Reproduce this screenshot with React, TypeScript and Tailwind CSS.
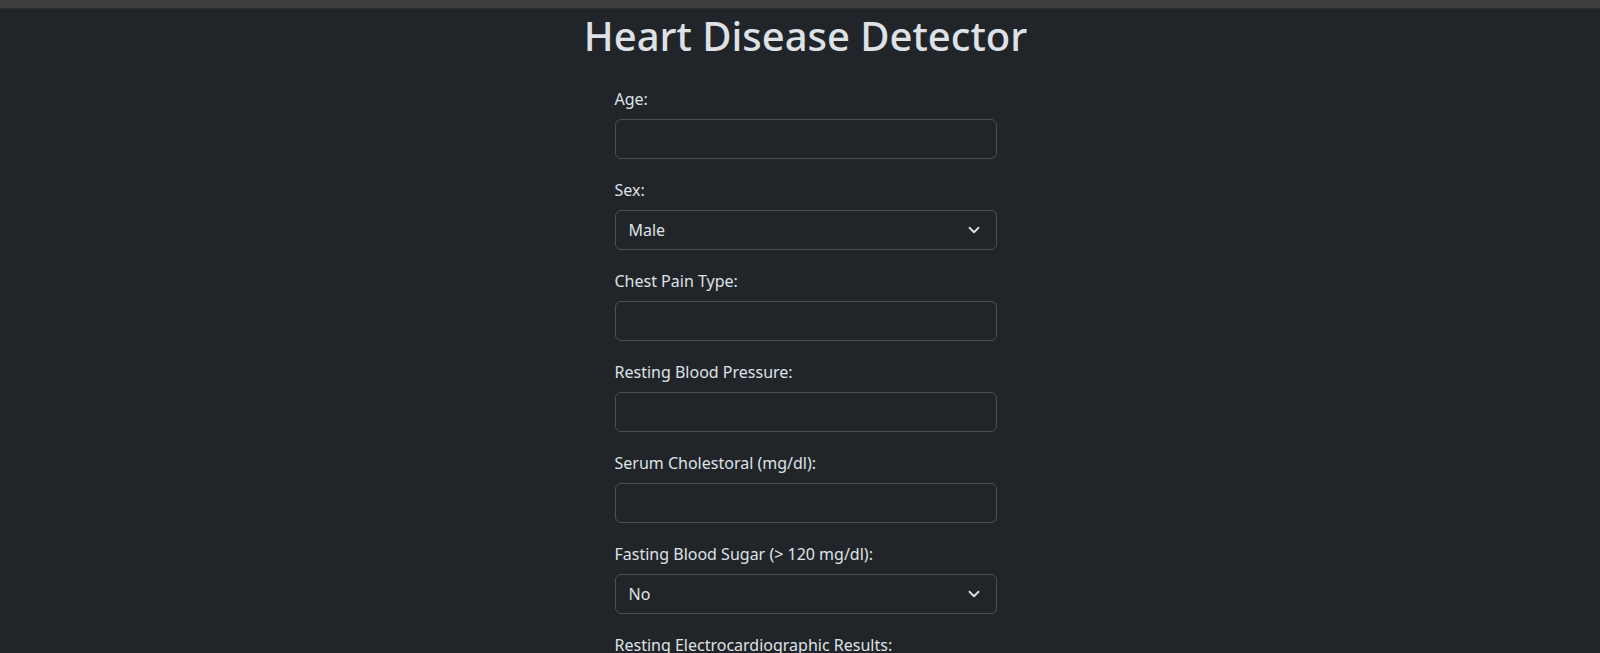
import { ChevronDown } from 'lucide-react'

type Field = {
  label: string
  kind: 'input' | 'select'
  value?: string
}

const FIELDS: Field[] = [
  { label: 'Age:', kind: 'input' },
  { label: 'Sex:', kind: 'select', value: 'Male' },
  { label: 'Chest Pain Type:', kind: 'input' },
  { label: 'Resting Blood Pressure:', kind: 'input' },
  { label: 'Serum Cholestoral (mg/dl):', kind: 'input' },
  { label: 'Fasting Blood Sugar (> 120 mg/dl):', kind: 'select', value: 'No' },
  { label: 'Resting Electrocardiographic Results:', kind: 'input' },
  { label: 'Maximum Heart Rate Achieved:', kind: 'input' },
]

function FormField({ label, kind, value }: Field) {
  return (
    <div className="mb-[17px] flex flex-col">
      <label className="mb-[7px] pt-[1px] text-[16px] leading-[26px] text-[#dee2e6]">
        {label}
      </label>
      {kind === 'input' ? (
        <div className="h-[40px] w-full rounded-[6px] border border-[#495057] bg-[#212529]" />
      ) : (
        <div className="flex h-[40px] w-full items-center justify-between rounded-[6px] border border-[#495057] bg-[#212529] pl-[13px] pr-[13px] text-[16px] text-[#dee2e6]">
          <span>{value}</span>
          <ChevronDown className="h-[18px] w-[18px] text-[#dee2e6]" strokeWidth={2.4} />
        </div>
      )}
    </div>
  )
}

export default function App() {
  return (
    <div
      className="flex min-h-screen flex-col bg-[#212529]"
      style={{ fontFamily: '"Noto Sans", "Open Sans", sans-serif' }}
    >
      <div className="h-[9px] w-full border-b border-[#2c2c2c] bg-[#3e3e3e]" />
      <div className="flex flex-col items-center pl-[11px]">
        <h1 className="mt-[1px] mb-[23px] text-center text-[40px] leading-[52px] font-medium whitespace-nowrap text-[#dee2e6]">
          Heart Disease Detector
        </h1>
        <div className="flex w-[382px] flex-col">
          {FIELDS.map((f) => (
            <FormField key={f.label} {...f} />
          ))}
        </div>
      </div>
    </div>
  )
}
